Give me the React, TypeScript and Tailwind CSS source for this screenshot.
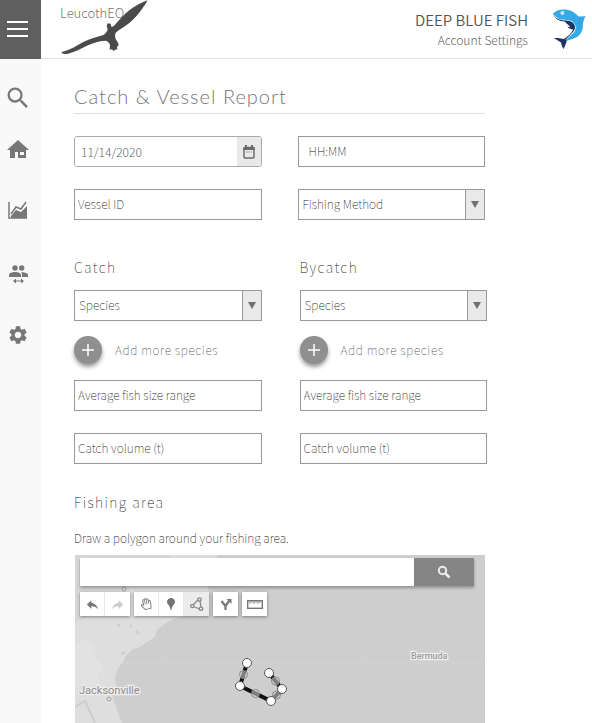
import { useId, useState, type ReactNode } from "react";
import { MdReply, MdSearch, MdSettings } from "react-icons/md";
import { FaRegHandPaper } from "react-icons/fa";

const sans = "font-['Noto_Sans_CJK_JP',Lato,sans-serif]";

function BirdLogo() {
  return (
    <svg viewBox="0 0 264 165" className="h-[55px] w-[88px]" aria-hidden="true">
      <path
        fill="#4b4b4b"
        d="M262 1C246 6 226 18 208 31C190 45 178 60 165 74C160 79 157 81 154 80L152 71L143 70L140 77L143 88C141 96 136 102 128 106C104 113 78 120 55 134C36 146 18 153 5 156C4 161 12 163 24 161C46 156 66 145 84 136C102 127 122 122 138 122C144 124 149 129 150 136L149 149L156 148L160 153L166 149L172 148L171 141L176 135L173 126C165 116 163 107 167 98C180 87 196 78 209 68C222 58 235 42 246 27C252 19 259 10 262 1Z"
      />
    </svg>
  );
}

function FishLogo() {
  return (
    <svg viewBox="0 0 102 124" className="h-[41px] w-[34px]" aria-hidden="true">
      <path
        fill="#36a9e8"
        d="M2 15C10 4 26 0 44 2C59 4 71 12 80 23L101 22C96 31 94 38 93 48C94 66 86 80 71 87C58 93 45 94 36 102C43 87 60 80 68 68C75 56 70 42 58 36C48 31 33 36 21 30C14 26 8 21 2 15Z"
      />
      <path
        fill="#1f3561"
        d="M3 17C9 28 22 34 38 35C57 34 71 43 69 58C66 71 52 79 41 92L44 99L35 121C30 115 28 107 27 101L5 88C14 87 27 89 36 91C46 82 60 74 63 61C58 63 51 60 46 54L55 55C50 48 43 44 38 38C23 38 9 31 3 17Z"
      />
      <circle cx="31" cy="12" r="6" fill="#c4e8f9" />
      <path d="M82 25C86 38 84 51 79 61" fill="none" stroke="#2b93d4" strokeWidth="2" />
    </svg>
  );
}

function HomeIcon() {
  return (
    <svg viewBox="0 0 22 20" className="h-5 w-[22px]" fill="currentColor" aria-hidden="true">
      <path fillRule="evenodd" d="M11 1L22 11H19V19H3V11H0ZM8 13V19H11V13ZM13 13V16H17V13Z" />
    </svg>
  );
}

function ChartIcon() {
  return (
    <svg viewBox="0 0 20 18" className="h-[18px] w-5" aria-hidden="true">
      <path d="M1 1V17H19" fill="none" stroke="currentColor" strokeWidth="1.5" />
      <path d="M3 13L8 6L13 8L18 1" fill="none" stroke="currentColor" strokeWidth="1.5" />
      <path d="M3 17V15L8 9L13 11L19 5V17Z" fill="currentColor" />
    </svg>
  );
}

function PeopleIcon() {
  return (
    <svg viewBox="0 0 19 19" className="size-[19px]" fill="currentColor" aria-hidden="true">
      <circle cx="6" cy="3" r="2.7" />
      <circle cx="12.7" cy="3" r="2.7" />
      <path d="M0 12V10C0 6 12 6 12 10V12ZM13 12V10C13 8.700 12.500 7.900 12 7.200C15.500 7 19 8 19 10V12Z" />
      <path d="M4 16L7 13.500V15.400H12V13.500L15 16L12 18.500V16.600H7V18.500Z" />
    </svg>
  );
}

function CalendarIcon() {
  return (
    <svg viewBox="0 0 12 14" className="h-[14px] w-3" aria-hidden="true">
      <rect x="1" y="2.500" width="10" height="10.500" rx="1" fill="none" stroke="#6b6b6b" strokeWidth="1.500" />
      <path d="M0.500 2H11.500V5H0.500ZM2 0H4V3H2ZM8 0H10V3H8Z" fill="#6b6b6b" />
      <path d="M3 7H9" stroke="#888" strokeDasharray="1.500 1" />
    </svg>
  );
}

function Field({ label, inset = "px-[3px]" }: { label: string; inset?: string }) {
  return (
    <input
      type="text"
      aria-label={label}
      placeholder={label}
      className={`block h-[31px] w-full border border-[#999] bg-white pb-[2px] text-xs leading-4 font-thin text-[#222] outline-none placeholder:text-[#222] placeholder:opacity-100 ${inset}`}
    />
  );
}

function Picker({ label, options }: { label: string; options: string[] }) {
  return (
    <div className="relative h-[31px]">
      <select
        aria-label={label}
        defaultValue=""
        className="block size-full appearance-none border border-[#999] bg-white pb-[2px] pl-1 text-xs leading-4 font-thin text-[#222] outline-none"
      >
        <option value="">{label}</option>
        {options.map((o) => (
          <option key={o}>{o}</option>
        ))}
      </select>
      <span className="pointer-events-none absolute inset-y-0 right-0 flex w-5 items-center justify-center border border-[#999] bg-[#e9e9e9]">
        <svg viewBox="0 0 8 7" className="h-[7px] w-2" aria-hidden="true">
          <path d="M0 0H8L4 7Z" fill="#707070" />
        </svg>
      </span>
    </div>
  );
}

function CatchGroup({ title }: { title: string }) {
  return (
    <fieldset className="min-w-0">
      <legend className="h-[33px] text-sm leading-5 font-thin tracking-widest text-[#222]">
        {title}
      </legend>
      <Picker label="Species" options={["Cod", "Tuna", "Mackerel"]} />
      <button type="button" className="mt-[15px] flex items-center gap-[13px] text-xs leading-5 font-thin tracking-wider text-[#555]">
        <span className="flex size-7 items-center justify-center rounded-full bg-[#8f8f8f] shadow-[0_3px_4px_rgba(0,0,0,0.4)]">
          <svg viewBox="0 0 12 12" className="size-3" aria-hidden="true">
            <path d="M6 0V12M0 6H12" stroke="white" strokeWidth="1.500" />
          </svg>
        </span>
        Add more species
      </button>
      <div className="mt-4 flex flex-col gap-[22px]">
        <Field label="Average fish size range" />
        <Field label="Catch volume (t)" />
      </div>
    </fieldset>
  );
}

function Tool({ label, active, children }: { label: string; active?: boolean; children: ReactNode }) {
  return (
    <button
      type="button"
      aria-label={label}
      className={`flex h-6 w-[25px] items-center justify-center ${active ? "bg-[#ececec]" : "bg-white"}`}
    >
      {children}
    </button>
  );
}

function MapDrawing() {
  const nodes = [
    [172, 108],
    [165, 131],
    [196, 146],
    [207, 134],
    [194, 118],
  ];
  return (
    <svg
      viewBox="0 0 410 168"
      preserveAspectRatio="xMinYMin slice"
      className="absolute inset-0 size-full"
      role="img"
      aria-label="Map of the fishing area"
    >
      <rect width="410" height="168" fill="#cecece" />
      <path
        fill="#dedede"
        d="M0 0H143L137 8L139 16L133 30L135 52L127 60L112 61L102 63L94 66L85 72L81 77L80 82L72 87L65 92L58 94L50 101L49 106L43 113L40 122L41 131L37 140L40 149L43 157L47 168H0Z"
      />
      <path fill="#d7d7d7" d="M0 0H96L88 12L70 18L66 30L48 33L35 44L23 47L15 60L0 68Z" />
      <path fill="#e2e2e2" d="M0 91L10 84L23 91L18 101L28 112L23 121L27 136L13 130L0 133Z" />
      <path d="M42 69L45 71M55 70L57 72M61 76L64 79M46 99L50 97M0 152L10 146L20 168" fill="none" stroke="#cdcdcd" strokeWidth="2" />
      <path d="M88 70V168M50 108H410M287 0V168" fill="none" stroke="#d2d2d2" strokeWidth="1" />
      <g fill="none" stroke="#a5a5a5" strokeWidth="1">
        <circle cx="49" cy="34" r="2" />
        <circle cx="34" cy="144" r="2" />
      </g>
      <g className="font-[Roboto]" stroke="#eeeeee" strokeWidth="2.500" paintOrder="stroke" fill="#8d8d8d">
        <text x="4" y="139" fontSize="11">Jacksonville</text>
        <text x="336" y="104" fontSize="9" fontWeight="500" fill="#9d9d9d">Bermuda</text>
      </g>
      <polyline points={nodes.map((n) => n.join(",")).join(" ")} fill="none" stroke="#111" strokeWidth="4" />
      {nodes.slice(1).map(([x, y], i) => (
        <circle
          key={x}
          cx={(x + nodes[i][0]) / 2}
          cy={(y + nodes[i][1]) / 2}
          r="4"
          fill="#d8d8d8"
          fillOpacity="0.55"
          stroke="#888"
          strokeWidth="1"
        />
      ))}
      {nodes.map(([x, y]) => (
        <circle key={x} cx={x} cy={y} r="4.500" fill="white" stroke="#555" strokeWidth="1" />
      ))}
    </svg>
  );
}

function FishingMap() {
  return (
    <div className="relative ml-px min-h-[168px] flex-1 overflow-hidden bg-[#cecece]">
      <MapDrawing />
      <div className="relative pt-[3px] pr-[11px] pl-[5px]">
        <form role="search" className="flex h-7 shadow-[0_2px_3px_rgba(0,0,0,0.3)]" onSubmit={(e) => e.preventDefault()}>
          <input type="search" aria-label="Search the map" className="min-w-0 flex-1 bg-white px-2 text-xs outline-none" />
          <button type="submit" aria-label="Search" className="flex w-[60px] items-center justify-center bg-[#858585]">
            <svg viewBox="0 0 14 14" className="size-[14px]" fill="none" stroke="#eee" aria-hidden="true">
              <circle cx="5.500" cy="5.500" r="3.700" strokeWidth="2" />
              <path d="M8.500 8.500L12.500 12.500" strokeWidth="2.500" />
            </svg>
          </button>
        </form>
        <div className="mt-[6px] flex gap-1 *:shadow-[0_1px_3px_rgba(0,0,0,0.4)]">
          <div className="flex divide-x divide-[#e8e8e8]">
            <Tool label="Undo">
              <MdReply className="size-[15px] text-[#777]" />
            </Tool>
            <Tool label="Redo">
              <MdReply className="size-[15px] -scale-x-100 text-[#ccc]" />
            </Tool>
          </div>
          <div className="flex divide-x divide-[#e8e8e8]">
            <Tool label="Pan">
              <FaRegHandPaper className="size-3 -rotate-12 text-[#888]" />
            </Tool>
            <Tool label="Add marker">
              <svg viewBox="0 0 8 12" className="h-3 w-2" aria-hidden="true">
                <path d="M4 0C1.500 0 0 1.700 0 4C0 6.500 3 7 3.500 12H4.500C5 7 8 6.500 8 4C8 1.700 6.500 0 4 0Z" fill="#757575" />
              </svg>
            </Tool>
            <Tool label="Draw a line" active>
              <svg viewBox="0 0 14 14" className="size-[14px]" fill="none" stroke="#888" strokeWidth="1.300" aria-hidden="true">
                <path d="M8 3L3 8M3.500 9.500L9.500 12M10 4L11 10" />
                <circle cx="9.500" cy="2.500" r="1.700" />
                <circle cx="2.200" cy="9" r="1.600" />
                <circle cx="11" cy="11.800" r="1.700" />
              </svg>
            </Tool>
          </div>
          <Tool label="Add directions">
            <svg viewBox="0 0 12 12" className="size-3" aria-hidden="true">
              <path d="M5.500 12V8L1.500 3M5.500 8L9 3" fill="none" stroke="#777" strokeWidth="2.200" />
              <path d="M6.500 1H11.500V6Z" fill="#777" />
            </svg>
          </Tool>
          <Tool label="Measure distances">
            <svg viewBox="0 0 16 9" className="h-[9px] w-4" fill="none" stroke="#777" aria-hidden="true">
              <rect x="0.700" y="0.700" width="14.600" height="7.600" strokeWidth="1.400" />
              <path d="M3 1V4M5 1V3M7 1V4M9 1V3M11 1V4M13 1V3" strokeWidth="0.800" />
            </svg>
          </Tool>
        </div>
      </div>
    </div>
  );
}

export default function App() {
  const [date, setDate] = useState("11/14/2020");
  const dateId = useId();
  return (
    <div className={`flex min-h-screen flex-col bg-white ${sans}`}>
      <header className="flex h-[59px] border-b border-[#e4e4e4]">
        <button type="button" aria-label="Menu" className="flex h-[59px] w-[41px] flex-col items-center justify-center gap-[5px] bg-[#5f5f5f] pr-[6px] pb-[2px]">
          <span className="h-[2px] w-[21px] bg-white" />
          <span className="h-[2px] w-[21px] bg-white" />
          <span className="h-[2px] w-[21px] bg-white" />
        </button>
        <a href="#" className="relative ml-[19px] block h-[58px] w-[90px] text-[13px] leading-5 font-light text-[#777]">
          <span className="absolute top-[3px] left-0">LeucothEO</span>
          <span className="absolute top-0 left-0">
            <BirdLogo />
          </span>
        </a>
        <div className="mr-6 ml-auto pt-[9px] text-right">
          <p className="text-[15px] leading-[22px] font-[350] text-[#555]">DEEP BLUE FISH</p>
          <a href="#" className="block text-xs leading-[18px] font-light text-[#666]">
            Account Settings
          </a>
        </div>
        <div className="mr-[6px] pt-[9px]">
          <FishLogo />
        </div>
      </header>
      <div className="flex flex-1">
        <nav aria-label="Main" className="flex w-[41px] flex-col bg-[#f9f9f9] pt-[25px] pr-[5px] text-[#777]">
          <a href="#" aria-label="Search" className="flex h-7 items-center justify-center">
            <MdSearch className="size-7" />
          </a>
          <a href="#" aria-label="Home" className="mt-[23px] flex h-7 items-center justify-center">
            <HomeIcon />
          </a>
          <a href="#" aria-label="Statistics" className="mt-[33px] flex h-7 items-center justify-center">
            <ChartIcon />
          </a>
          <a href="#" aria-label="Crew" className="mt-9 flex h-7 items-center justify-center">
            <PeopleIcon />
          </a>
          <a href="#" aria-label="Settings" className="mt-[33px] flex h-7 items-center justify-center">
            <MdSettings className="size-[22px]" />
          </a>
        </nav>
        <main className="flex min-w-0 flex-1 flex-col pt-[23px] pr-[107px] pl-[33px]">
          <h1 className="border-b border-[#e0e0e0] pb-[3px] font-[Lato] text-xl leading-7 font-light tracking-wider text-[#777]">
            Catch &amp; Vessel Report
          </h1>
          <div className="mt-[22px] grid grid-cols-2 gap-x-9 gap-y-[22px]">
            <div className="flex h-[31px] overflow-hidden rounded-[3px] border border-[#aaa]">
              <input
                id={dateId}
                type="text"
                aria-label="Date"
                value={date}
                onChange={(e) => setDate(e.target.value)}
                className="min-w-0 flex-1 bg-white px-[6px] text-xs leading-4 font-light text-[#666] outline-none"
              />
              <button type="button" aria-label="Choose a date" className="flex w-6 items-center justify-center bg-[#e9e9e9]">
                <CalendarIcon />
              </button>
            </div>
            <Field label="HH:MM" inset="px-[10px]" />
            <Field label="Vessel ID" />
            <Picker label="Fishing Method" options={["Longline", "Trawling", "Purse seine"]} />
          </div>
          <div className="mt-[37px] -mr-[2px] grid grid-cols-2 gap-x-[38px]">
            <CatchGroup title="Catch" />
            <CatchGroup title="Bycatch" />
          </div>
          <h2 className="mt-7 text-sm leading-5 font-thin tracking-widest text-[#222]">Fishing area</h2>
          <p className="mt-4 mb-[7px] text-xs leading-5 font-thin text-[#111]">Draw a polygon around your fishing area.</p>
          <FishingMap />
        </main>
      </div>
    </div>
  );
}
